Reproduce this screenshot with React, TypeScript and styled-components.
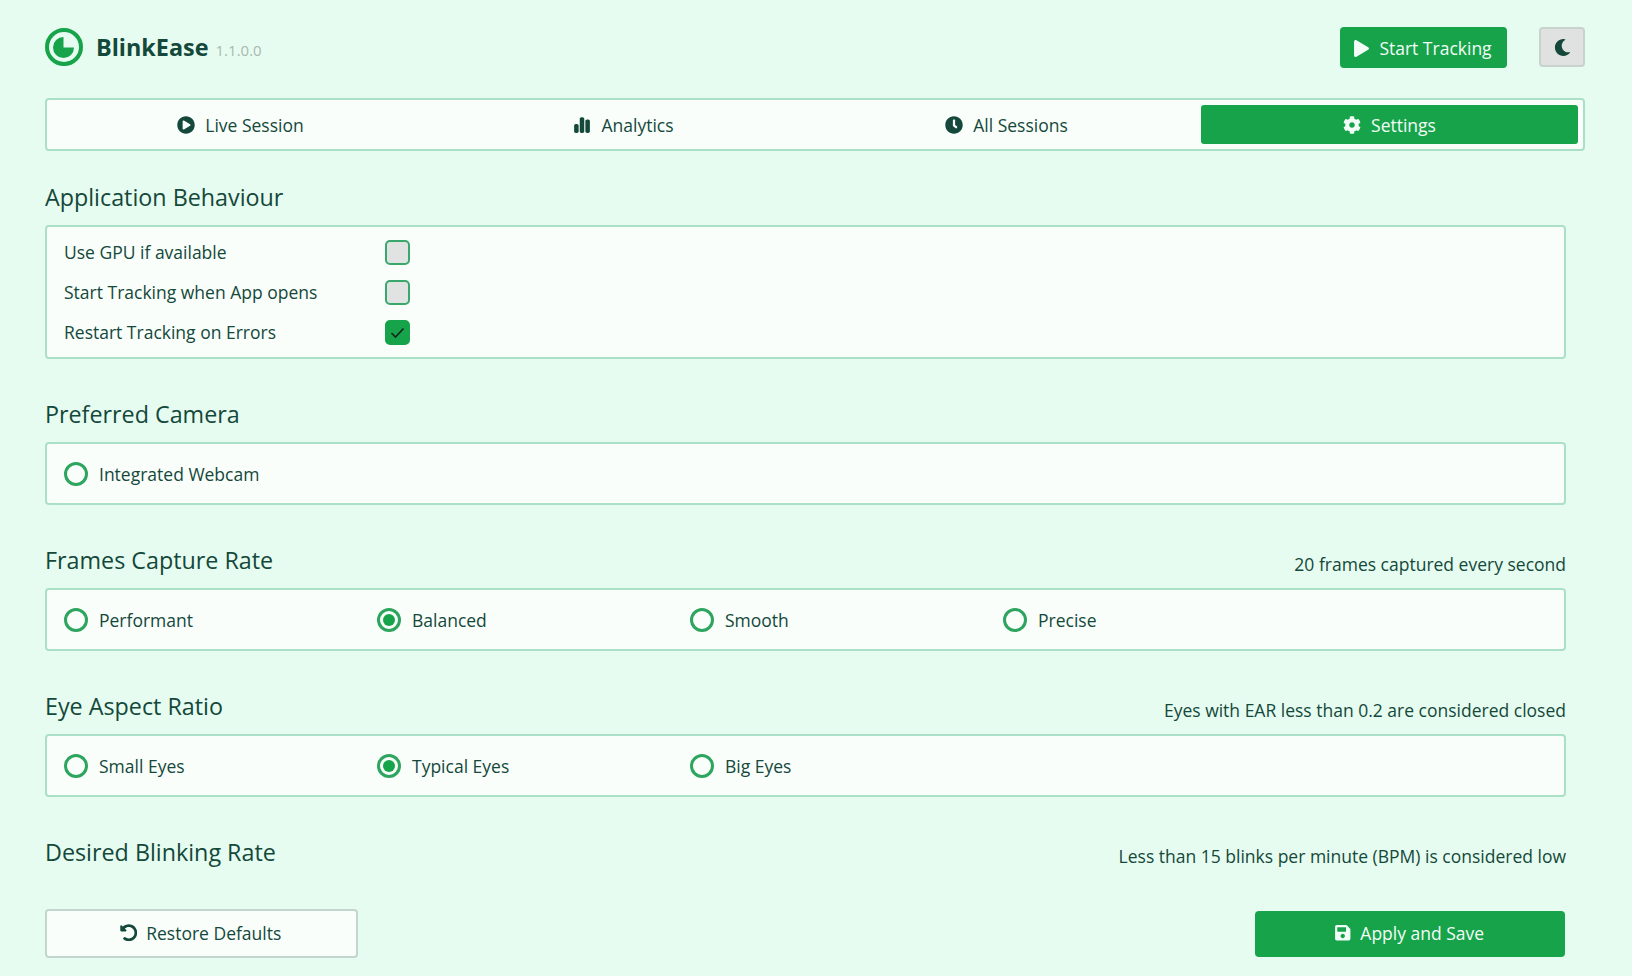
import { createGlobalStyle } from "styled-components";
import styled from "styled-components";
import {
    FaPlay,
    FaMoon,
    FaPlayCircle,
    FaClock,
    FaCog,
    FaUndoAlt,
    FaSave,
} from "react-icons/fa";
import { FaChartSimple } from "react-icons/fa6";
import type { ReactNode } from "react";

const GREEN = "#16a34a";
const INK = "#14483a";
const PANEL = "#f9fefb";
const LINE = "#a9e0c6";

const GlobalStyle = createGlobalStyle`
    html, body, #root {
        margin: 0;
        height: 100%;
    }
    body {
        background: #e6fcf0;
        color: ${INK};
        font-family: "Open Sans", "Noto Sans", sans-serif;
        overflow: hidden;
    }
    * {
        box-sizing: border-box;
    }
`;

const Page = styled.div`
    height: 976px;
    display: flex;
    flex-direction: column;
    padding: 26px 47px 18px 45px;
`;

const Header = styled.header`
    display: flex;
    align-items: center;
    height: 42px;
    flex-shrink: 0;
`;

const Brand = styled.div`
    display: flex;
    align-items: center;
    flex: 1;
`;

const Name = styled.span`
    margin-left: 13px;
    font-size: 23.4px;
    font-weight: 700;
`;

const Version = styled.span`
    margin-left: 7px;
    margin-top: 6px;
    font-size: 15px;
    color: #a9b9b1;
`;

const Button = styled.button<{ $variant: "primary" | "plain" }>`
    display: flex;
    align-items: center;
    justify-content: center;
    gap: 9px;
    padding: 0 2px 2px 0;
    font-family: inherit;
    font-size: 17.5px;
    border-radius: 4px;
    cursor: pointer;
    color: ${(p) => (p.$variant === "primary" ? "#f3fdf7" : INK)};
    background: ${(p) => (p.$variant === "primary" ? GREEN : PANEL)};
    border: ${(p) => (p.$variant === "primary" ? "none" : "2px solid #c3d6cd")};
`;

const TrackButton = styled(Button)`
    width: 167px;
    height: 41px;
    padding: 2px 2px 0 0;
    svg {
        font-size: 17px;
    }
`;

const ThemeButton = styled.button`
    width: 46px;
    height: 40px;
    margin-left: 32px;
    display: flex;
    align-items: center;
    justify-content: center;
    background: #dfe2e0;
    border: 2px solid #c8d3ce;
    border-radius: 4px;
    color: ${INK};
    font-size: 17px;
`;

const Tabs = styled.nav`
    flex-shrink: 0;
    margin-top: 30px;
    height: 53px;
    display: grid;
    grid-template-columns: repeat(4, 1fr);
    gap: 6px;
    padding: 5px;
    background: ${PANEL};
    border: 2px solid ${LINE};
    border-radius: 4px;
`;

const Tab = styled.div<{ $active?: boolean }>`
    display: flex;
    align-items: center;
    justify-content: center;
    gap: 10px;
    font-size: 17.5px;
    border-radius: 3px;
    background: ${(p) => (p.$active ? GREEN : "transparent")};
    color: ${(p) => (p.$active ? "#f3fdf7" : INK)};
    svg {
        font-size: 18px;
    }
`;

const Content = styled.main`
    flex: 1;
    min-height: 0;
    overflow: hidden;
    padding-right: 19px;
`;

const Section = styled.section`
    margin-top: 38px;
    &:first-child {
        margin-top: 29px;
    }
`;

const SectionHead = styled.div`
    display: flex;
    justify-content: space-between;
    align-items: flex-start;
    height: 36px;
    margin-bottom: 9px;
`;

const Title = styled.h2`
    margin: 1px 0 0;
    font-size: 23.3px;
    font-weight: 400;
    line-height: 32px;
`;

const Hint = styled.span`
    margin-top: 9px;
    font-size: 17.5px;
    line-height: 24px;
`;

const Panel = styled.div`
    background: ${PANEL};
    border: 2px solid ${LINE};
    border-radius: 4px;
    padding: 0 17px;
`;

const CheckList = styled(Panel)`
    display: flex;
    flex-direction: column;
    padding-top: 5px;
    padding-bottom: 5px;
`;

const CheckRow = styled.div`
    display: flex;
    align-items: center;
    height: 40px;
    font-size: 17.5px;
`;

const CheckLabel = styled.span`
    width: 321px;
`;

const Check = styled.span<{ $on?: boolean }>`
    width: 25px;
    height: 25px;
    border-radius: 5px;
    display: flex;
    align-items: center;
    justify-content: center;
    border: 2px solid ${(p) => (p.$on ? GREEN : "#3aa76c")};
    background: ${(p) => (p.$on ? GREEN : "#e0e3e1")};
`;

const RadioRow = styled(Panel)`
    display: flex;
    align-items: center;
    height: 63px;
`;

const RadioItem = styled.div`
    width: 313px;
    display: flex;
    align-items: center;
    gap: 11px;
    font-size: 17.5px;
`;

const RadioMark = styled.span<{ $on?: boolean }>`
    width: 24px;
    height: 24px;
    border-radius: 50%;
    border: 3px solid #2ea55f;
    background: ${PANEL};
    display: flex;
    align-items: center;
    justify-content: center;
    &::after {
        content: "";
        display: ${(p) => (p.$on ? "block" : "none")};
        width: 12px;
        height: 12px;
        border-radius: 50%;
        background: ${GREEN};
    }
`;

const Footer = styled.footer`
    flex-shrink: 0;
    display: flex;
    justify-content: space-between;
    align-items: center;
    height: 49px;
    padding-right: 20px;
`;

const RestoreButton = styled(Button)`
    width: 313px;
    height: 49px;
`;

const SaveButton = styled(Button)`
    width: 310px;
    height: 46px;
`;

const Logo = () => (
    <svg width="38" height="38" viewBox="0 0 38 38">
        <circle cx="19" cy="19" r="17" fill="none" stroke={GREEN} strokeWidth="4" />
        <path d="M18.5 9 A10.5 10.5 0 1 0 29 19.5 L18.5 19.5 Z" fill={GREEN} />
    </svg>
);

const Radio = ({ on, children }: { on?: boolean; children: ReactNode }) => (
    <RadioItem>
        <RadioMark $on={on} />
        {children}
    </RadioItem>
);

const CheckOption = ({ on, children }: { on?: boolean; children: ReactNode }) => (
    <CheckRow>
        <CheckLabel>{children}</CheckLabel>
        <Check $on={on}>
            {on && (
                <svg width="17" height="17" viewBox="0 0 17 17">
                    <path
                        d="M2.5 9 L6.5 13 L14.5 4.5"
                        fill="none"
                        stroke="#0e2a1c"
                        strokeWidth="1.7"
                    />
                </svg>
            )}
        </Check>
    </CheckRow>
);

const App = () => {
    return (
        <Page>
            <GlobalStyle />
            <Header>
                <Brand>
                    <Logo />
                    <Name>BlinkEase</Name>
                    <Version>1.1.0.0</Version>
                </Brand>
                <TrackButton $variant="primary">
                    <FaPlay />
                    Start Tracking
                </TrackButton>
                <ThemeButton>
                    <FaMoon />
                </ThemeButton>
            </Header>

            <Tabs>
                <Tab>
                    <FaPlayCircle />
                    Live Session
                </Tab>
                <Tab>
                    <FaChartSimple />
                    Analytics
                </Tab>
                <Tab>
                    <FaClock />
                    All Sessions
                </Tab>
                <Tab $active>
                    <FaCog />
                    Settings
                </Tab>
            </Tabs>

            <Content>
                <Section>
                    <SectionHead>
                        <Title>Application Behaviour</Title>
                    </SectionHead>
                    <CheckList>
                        <CheckOption>Use GPU if available</CheckOption>
                        <CheckOption>Start Tracking when App opens</CheckOption>
                        <CheckOption on>Restart Tracking on Errors</CheckOption>
                    </CheckList>
                </Section>

                <Section>
                    <SectionHead>
                        <Title>Preferred Camera</Title>
                    </SectionHead>
                    <RadioRow>
                        <Radio>Integrated Webcam</Radio>
                    </RadioRow>
                </Section>

                <Section>
                    <SectionHead>
                        <Title>Frames Capture Rate</Title>
                        <Hint>20 frames captured every second</Hint>
                    </SectionHead>
                    <RadioRow>
                        <Radio>Performant</Radio>
                        <Radio on>Balanced</Radio>
                        <Radio>Smooth</Radio>
                        <Radio>Precise</Radio>
                    </RadioRow>
                </Section>

                <Section>
                    <SectionHead>
                        <Title>Eye Aspect Ratio</Title>
                        <Hint>Eyes with EAR less than 0.2 are considered closed</Hint>
                    </SectionHead>
                    <RadioRow>
                        <Radio>Small Eyes</Radio>
                        <Radio on>Typical Eyes</Radio>
                        <Radio>Big Eyes</Radio>
                    </RadioRow>
                </Section>

                <Section>
                    <SectionHead>
                        <Title>Desired Blinking Rate</Title>
                        <Hint>Less than 15 blinks per minute (BPM) is considered low</Hint>
                    </SectionHead>
                </Section>
            </Content>

            <Footer>
                <RestoreButton $variant="plain">
                    <FaUndoAlt />
                    Restore Defaults
                </RestoreButton>
                <SaveButton $variant="primary">
                    <FaSave />
                    Apply and Save
                </SaveButton>
            </Footer>
        </Page>
    );
};

export default App;
